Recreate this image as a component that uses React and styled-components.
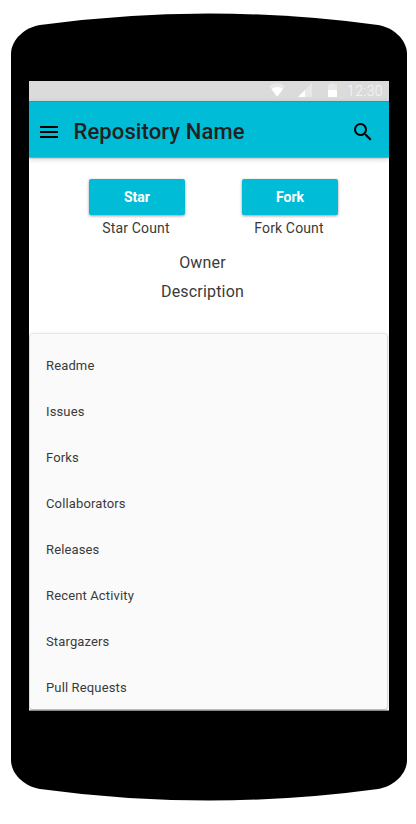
import React from 'react';
import styled, { createGlobalStyle } from 'styled-components';

const GlobalStyle = createGlobalStyle`
  * { box-sizing: border-box; }
  body { margin: 0; background: #fff; font-family: Roboto, sans-serif; }
`;

const Phone = styled.main`
  display: flex;
  flex-direction: column;
  width: 396px;
  height: 824px;
  margin-left: 11px;
  padding-top: 13px;
`;

const Cap = styled.svg`
  display: block;
  flex: none;
  width: 396px;
  height: ${(p) => p.$height}px;
`;

const Bezel = styled.div`
  flex: none;
  height: 630px;
  padding: 0 18px;
  background: #000;
`;

const Screen = styled.div`
  display: flex;
  flex-direction: column;
  height: 630px;
  overflow: hidden;
  background: #fff;
  border-bottom: 1px solid #8a8a8a;
`;

const StatusBar = styled.div`
  display: flex;
  flex: none;
  justify-content: flex-end;
  height: 20px;
  padding-right: 6px;
  background: #dbdbdb;
`;

const StatusIcons = styled.svg`
  width: 78px;
  height: 20px;
`;

const Clock = styled.time`
  width: 36px;
  font-size: 14px;
  font-weight: 300;
  line-height: 20px;
  letter-spacing: 0.4px;
  white-space: nowrap;
  color: #f8f8f8;
`;

const AppBar = styled.header`
  display: flex;
  flex: none;
  align-items: center;
  height: 56px;
  padding: 0 14px 0 8px;
  background: #00bcd7;
  border-top: 1px solid #04a8bf;
  box-shadow: 0 1px 1px rgba(0, 0, 0, 0.3), 0 2px 5px rgba(0, 0, 0, 0.22);
`;

const Icon = styled.svg`
  flex: none;
  width: 24px;
  height: 24px;
  margin-top: 5px;
  fill: #000;
`;

const Title = styled.h1`
  flex: 1;
  margin: 5px 0 0 12.5px;
  font-size: 22px;
  font-weight: 500;
  line-height: 28px;
  letter-spacing: 0.1px;
  color: #212121;
`;

const Summary = styled.section`
  flex: none;
  height: 177px;
  padding-top: 22px;
`;

const Actions = styled.div`
  display: flex;
  gap: 57px;
  padding-left: 60px;
`;

const Action = styled.div`
  width: 96px;
  text-align: center;
`;

const Button = styled.button`
  display: block;
  width: 96px;
  height: 36px;
  padding: 0;
  border: 0;
  border-radius: 2px;
  background: #00bcd7;
  box-shadow: 0 1px 3px rgba(0, 0, 0, 0.4);
  color: #fff;
  font: 700 14px/36px Roboto, sans-serif;
`;

const Count = styled.div`
  margin-left: -2px;
  font-size: 14px;
  line-height: 26px;
  letter-spacing: 0.14px;
  white-space: nowrap;
  color: #3a3a3a;
`;

const Detail = styled.p`
  width: 347px;
  margin: 0;
  font-size: 16px;
  line-height: 29px;
  letter-spacing: 0.18px;
  text-align: center;
  color: #3a3a3a;

  &:first-of-type { margin-top: 7px; }
`;

const Menu = styled.ul`
  flex: none;
  width: 357px;
  height: 375px;
  margin: 0 0 0 1px;
  padding: 9px 0 0;
  list-style: none;
  border-radius: 2px;
  background: #fafafa;
  box-shadow: 0 0 3px rgba(0, 0, 0, 0.22), 0 1px 2px rgba(0, 0, 0, 0.3);
`;

const MenuItem = styled.li`
  height: 46px;
  padding-left: 16px;
  font-size: 13px;
  line-height: 46px;
  letter-spacing: 0.14px;
  color: #3a3a3a;
`;

const items = [
  'Readme', 'Issues', 'Forks', 'Collaborators',
  'Releases', 'Recent Activity', 'Stargazers', 'Pull Requests',
];

export default function App() {
  return (
    <>
      <GlobalStyle />
      <Phone>
        <Cap $height={68} viewBox="0 0 396 68" aria-hidden="true">
          <path d="M0 68V41C0 26 15 14 29 12Q113 .5 198 .5T367 12C381 14 396 26 396 41V68Z" />
        </Cap>
        <Bezel>
          <Screen>
            <StatusBar>
              <StatusIcons viewBox="-1 0 78 20" aria-hidden="true">
                <path fill="#e8e8e8" d="M-.8 5.200Q7 -1 15.200 5.200L7.200 15.800Z" />
                <path fill="#fff" d="M1.500 8Q7.200 4 13 8L7.200 15.800Z" />
                <path fill="#e8e8e8" d="M42 2V16H28Z" />
                <path fill="#fff" d="M35 9V16H28Z" />
                <path fill="#e8e8e8" d="M58 3.500H60.500V2H64.500V3.500H67V9H58Z" />
                <path fill="#fff" d="M58 9H67V16H58Z" />
              </StatusIcons>
              <Clock>12:30</Clock>
            </StatusBar>
            <AppBar>
              <Icon viewBox="0 0 24 24" aria-label="Menu">
                <path d="M3 18h18v-2H3v2zm0-5h18v-2H3v2zm0-7v2h18V6H3z" />
              </Icon>
              <Title>Repository Name</Title>
              <Icon viewBox="0 0 24 24" aria-label="Search">
                <path d="M15.500 14h-.79l-.28-.27A6.471 6.471 0 0 0 16 9.500 6.500 6.500 0 1 0 9.500 16c1.610 0 3.090-.59 4.230-1.570l.27.28v.79l5 4.990L20.490 19l-4.990-5zm-6 0C7.010 14 5 11.990 5 9.500S7.010 5 9.500 5 14 7.010 14 9.500 11.990 14 9.500 14z" />
              </Icon>
            </AppBar>
            <Summary>
              <Actions>
                <Action>
                  <Button>Star</Button>
                  <Count>Star Count</Count>
                </Action>
                <Action>
                  <Button>Fork</Button>
                  <Count>Fork Count</Count>
                </Action>
              </Actions>
              <Detail>Owner</Detail>
              <Detail>Description</Detail>
            </Summary>
            <Menu>
              {items.map((item) => <MenuItem key={item}>{item}</MenuItem>)}
            </Menu>
          </Screen>
        </Bezel>
        <Cap $height={90} viewBox="0 0 396 90" aria-hidden="true">
          <path d="M0 0V49C0 64 15 76 29 78Q113 89.500 198 89.500T367 78C381 76 396 64 396 49V0Z" />
        </Cap>
      </Phone>
    </>
  );
}
